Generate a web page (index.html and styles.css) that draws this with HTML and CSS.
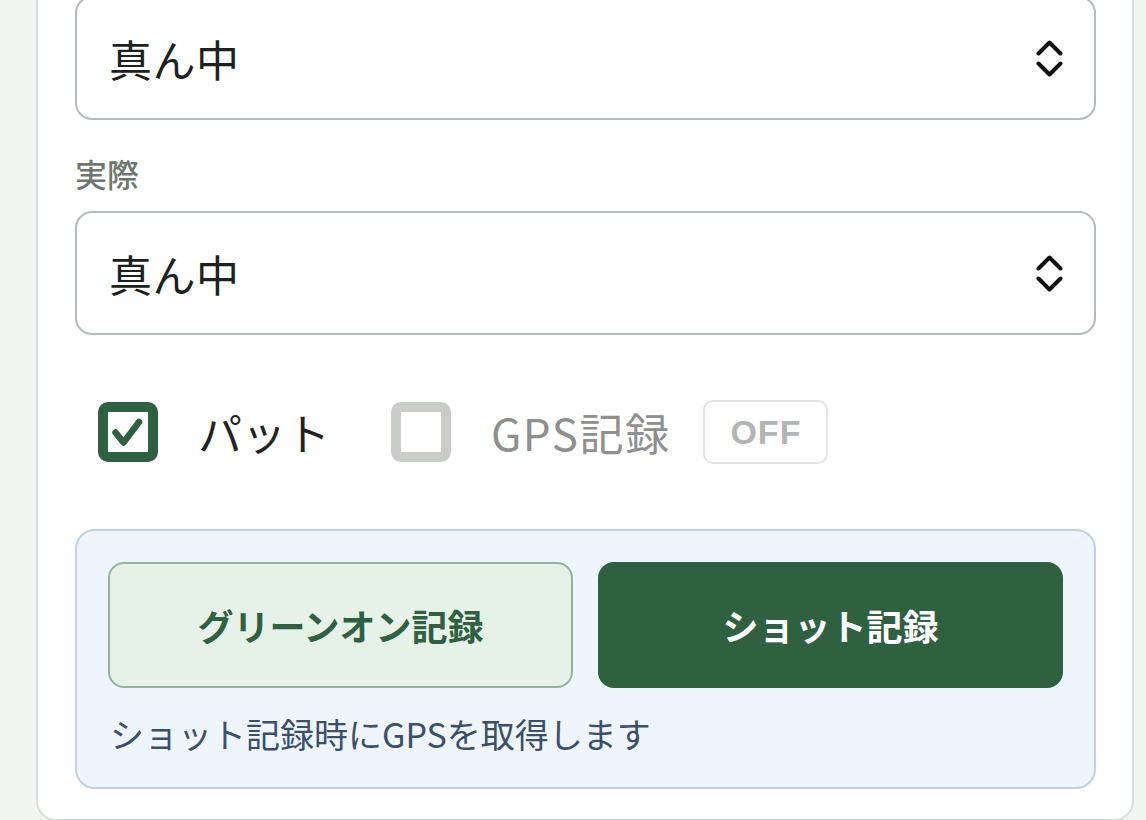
FILE: index.html
```html
<!DOCTYPE html>
<html lang="ja">
<head>
<meta charset="utf-8">
<title>ショット記録</title>
<link rel="stylesheet" href="styles.css">
</head>
<body>
<div class="card">
  <div class="select">
    <span class="select-value">真ん中</span>
    <svg class="chev" width="27" height="37" viewBox="0 0 27 37"><polyline points="2.5,13.5 13.5,2.5 24.5,13.5"/><polyline points="2.5,23.5 13.5,34.5 24.5,23.5"/></svg>
  </div>
  <div class="field-label">実際</div>
  <div class="select">
    <span class="select-value">真ん中</span>
    <svg class="chev" width="27" height="37" viewBox="0 0 27 37"><polyline points="2.5,13.5 13.5,2.5 24.5,13.5"/><polyline points="2.5,23.5 13.5,34.5 24.5,23.5"/></svg>
  </div>

  <div class="check-row">
    <label class="check-item">
      <span class="box box-on"><svg width="40" height="40" viewBox="0 0 40 40"><polyline points="7.5,20.5 15.5,30.5 31,10"/></svg></span>
      <span class="check-text">パット</span>
    </label>
    <label class="check-item check-off">
      <span class="box box-off"></span>
      <span class="check-text">GPS記録</span>
    </label>
    <span class="badge">OFF</span>
  </div>

  <div class="record-panel">
    <div class="btn-row">
      <button class="btn btn-light">グリーンオン記録</button>
      <button class="btn btn-dark">ショット記録</button>
    </div>
    <p class="hint">ショット記録時にGPSを取得します</p>
  </div>
</div>
</body>
</html>
```

FILE: styles.css
```css
* { box-sizing: border-box; }
html, body {
  margin: 0;
  padding: 0;
  background: #f2f5f2;
  height: 820px;
  overflow: hidden;
}
body {
  font-family: "Noto Sans CJK JP", "Noto Sans", sans-serif;
  color: #1c211e;
}
.card {
  margin: -30px 0 0 36px;
  width: 1098px;
  background: #ffffff;
  border: 2px solid #d9dfda;
  border-radius: 20px;
  padding: 24px 36px 30px 37px;
}
.select {
  height: 124px;
  border: 2.5px solid #b4bcb6;
  border-radius: 17px;
  background: #fff;
  display: flex;
  align-items: center;
  justify-content: space-between;
  padding: 0 31px 0 32px;
}
.select-value {
  font-size: 43px;
  line-height: 1;
  color: #1c211e;
  letter-spacing: 0.5px;
}
.chev polyline {
  fill: none;
  stroke: #111;
  stroke-width: 4;
  stroke-linecap: round;
  stroke-linejoin: round;
}
.field-label {
  font-size: 32px;
  line-height: 36px;
  font-weight: 500;
  color: #6e7671;
  margin: 35px 0 20px 0;
}
.check-row {
  display: flex;
  align-items: center;
  height: 64px;
  margin-top: 65px;
  padding-left: 23px;
}
.check-item {
  display: flex;
  align-items: center;
  gap: 40px;
}
.check-item + .check-item { margin-left: 61px; }
.box {
  width: 60px;
  height: 60px;
  border-radius: 10px;
  border: 10px solid;
  background: #fff;
  display: block;
}
.box svg { display: block; }
.box-on { border-color: #2f6140; }
.box-on polyline {
  fill: none;
  stroke: #2f6140;
  stroke-width: 6.5;
  stroke-linecap: round;
  stroke-linejoin: round;
}
.box-off { border-color: #c9ccc9; }
.check-text {
  font-size: 44px;
  line-height: 1;
  color: #1f2421;
}
.check-off .check-text {
  color: #8e8f8e;
  letter-spacing: 1.5px;
}
.badge {
  margin-left: 33px;
  width: 125px;
  height: 64px;
  border: 2px solid #e2e3e2;
  border-radius: 10px;
  display: flex;
  align-items: center;
  justify-content: center;
  font-family: "Liberation Sans", "Noto Sans", sans-serif;
  font-weight: 700;
  font-size: 34px;
  color: #b3b4b3;
  letter-spacing: 1px;
}
.record-panel {
  margin-top: 65px;
  border: 2px solid #bdd0e4;
  background: #eef5fd;
  border-radius: 20px;
  padding: 31px 31px 31px 31px;
}
.btn-row {
  display: grid;
  grid-template-columns: 1fr 1fr;
  gap: 25px;
}
.btn {
  height: 126px;
  border-radius: 16px;
  font-family: "Noto Sans CJK JP", "Noto Sans", sans-serif;
  font-size: 36px;
  font-weight: 700;
  display: flex;
  align-items: center;
  justify-content: center;
  padding: 0;
}
.btn-light {
  background: #e6f2e8;
  border: 2px solid #93b39b;
  color: #2f6140;
}
.btn-dark {
  background: #2f6140;
  border: 2px solid #2f6140;
  color: #ffffff;
}
.hint {
  margin: 24px 0 0 2px;
  font-size: 34px;
  line-height: 44px;
  color: #3a4f6b;
}
```
